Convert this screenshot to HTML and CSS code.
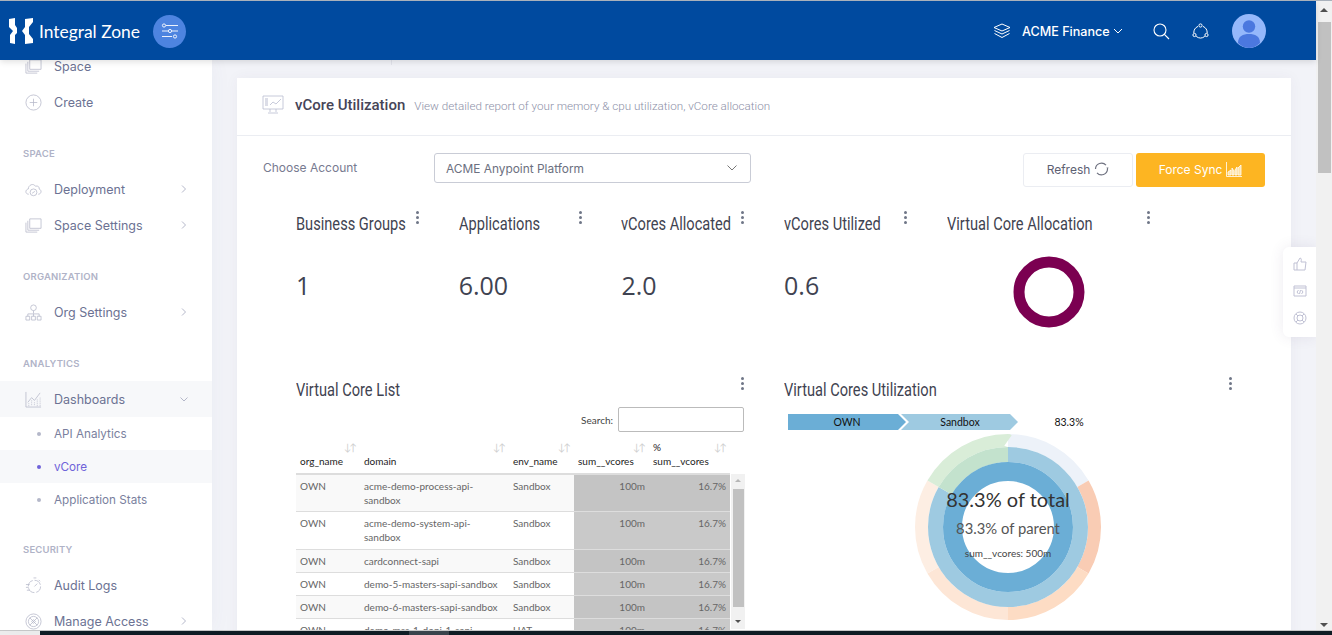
FILE: index.html
```html
<!DOCTYPE html>
<html lang="en">
<head>
    <meta charset="UTF-8">
    <title>vCore Utilization</title>
    <link rel="stylesheet" href="styles.css">
</head>
<body>
    <div class="window">
        <div class="page">
            <header class="topbar">
                <div class="brand">
                    <svg class="logo" width="24" height="26" viewBox="0 0 24 26" fill="#fff">
                        <path d="M0 1 L6 0 V7 L8 10 V15 L6 17 V26 L1 25 V17 L4 13 L0 9 Z"/>
                        <path d="M16 1 L24 0 V4 L20 9 V16 L24 21 V25 L16 26 V17 L13 13 L16 9 Z"/>
                    </svg>
                    <span class="brand-name">Integral Zone</span>
                    <span class="toggle">
                        <svg width="18" height="16" viewBox="0 0 18 16" fill="none" stroke="#fff" stroke-width="0.9">
                            <path d="M5 2.5H17M1 8H7M11 8H17M1 13.5H11"/>
                            <circle cx="3" cy="2.5" r="1.6"/><circle cx="9" cy="8" r="1.6"/><circle cx="14" cy="13.5" r="1.6"/>
                        </svg>
                    </span>
                </div>
                <div class="topbar-right">
                    <svg width="18" height="16" viewBox="0 0 18 16" fill="none" stroke="#fff" stroke-width="1">
                        <path d="M9 1 L17 4.5 L9 8 L1 4.5 Z"/>
                        <path d="M1.5 7.5 L9 11 L16.5 7.5"/>
                        <path d="M1.5 10.5 L9 14.5 L16.5 10.5"/>
                    </svg>
                    <span class="org-name">ACME Finance</span>
                    <svg class="org-caret" width="10" height="6" viewBox="0 0 10 6" fill="none" stroke="#fff"><path d="M1 1 L5 5 L9 1"/></svg>
                    <svg class="top-search" width="17" height="17" viewBox="0 0 17 17" fill="none" stroke="#fff" stroke-width="1.1">
                        <circle cx="7" cy="7" r="6"/><path d="M11.4 11.4 L16 16"/>
                    </svg>
                    <svg class="top-notify" width="17" height="16" viewBox="0 0 17 16" fill="none" stroke="#fff" stroke-width="1">
                        <circle cx="8.5" cy="2.5" r="1.6"/><circle cx="2.5" cy="12" r="1.6"/><circle cx="14.5" cy="12" r="1.6"/>
                        <path d="M6 3.4 A7 7 0 0 0 1.8 10M11 3.4 A7 7 0 0 1 15.2 10M4.2 13.4 A7 7 0 0 0 12.8 13.4"/>
                    </svg>
                    <span class="avatar">
                        <svg width="34" height="34" viewBox="0 0 34 34">
                            <circle cx="17" cy="12.5" r="6.2" fill="#4b78df"/>
                            <path d="M6 29 C6 22 11 20 17 20 C23 20 28 22 28 29 C25 32 21 34 17 34 C13 34 9 32 6 29 Z" fill="#4b78df"/>
                        </svg>
                    </span>
                </div>
            </header>

            <div class="layout">
                <aside class="sidebar">
                    <a class="nav-item">
                        <svg class="nav-icon" viewBox="0 0 18 18"><path d="M5 2H17V12H5Z"/><path d="M3 4V14H15M1 6V16H13"/></svg>
                        <span>Space</span>
                    </a>
                    <a class="nav-item">
                        <svg class="nav-icon" viewBox="0 0 18 18"><circle cx="9" cy="9" r="8"/><path d="M9 5V13M5 9H13"/></svg>
                        <span>Create</span>
                    </a>

                    <div class="nav-label">Space</div>
                    <a class="nav-item">
                        <svg class="nav-icon" viewBox="0 0 18 18"><path d="M4 14 C0 14 0 9 3.5 8.5 C3.5 4 9 2 11 5.5 C14 4.5 15.5 7 15 8.5 C18 9.5 17.5 14 14 14"/><circle cx="9" cy="12" r="3.6"/><path d="M7.5 13 L10.5 11"/></svg>
                        <span>Deployment</span>
                        <svg class="nav-arrow" viewBox="0 0 8 8"><path d="M2 0.5 L5.5 4 L2 7.5"/></svg>
                    </a>
                    <a class="nav-item">
                        <svg class="nav-icon" viewBox="0 0 18 18"><path d="M5 2H17V12H5Z"/><path d="M3 4V14H15M1 6V16H13"/></svg>
                        <span>Space Settings</span>
                        <svg class="nav-arrow" viewBox="0 0 8 8"><path d="M2 0.5 L5.5 4 L2 7.5"/></svg>
                    </a>

                    <div class="nav-label">Organization</div>
                    <a class="nav-item">
                        <svg class="nav-icon" viewBox="0 0 18 18"><circle cx="9" cy="4" r="3"/><path d="M9 7V10M3 13V10.5H15V13M9 10.5V13"/><path d="M1 13H5V17H1ZM7 13H11V17H7ZM13 13H17V17H13Z"/></svg>
                        <span>Org Settings</span>
                        <svg class="nav-arrow" viewBox="0 0 8 8"><path d="M2 0.5 L5.5 4 L2 7.5"/></svg>
                    </a>

                    <div class="nav-label">Analytics</div>
                    <a class="nav-item nav-open">
                        <svg class="nav-icon" viewBox="0 0 18 18"><path d="M1 1V17H17"/><path d="M3 12 L7 7 L10 10 L16 2"/><path d="M4 13V16M7 10V16M10 12V16M13 9V16M16 7V16" stroke-dasharray="1 1"/></svg>
                        <span>Dashboards</span>
                        <svg class="nav-arrow" viewBox="0 0 8 8"><path d="M0.5 2.5 L4 6 L7.5 2.5"/></svg>
                    </a>
                    <a class="sub-item"><i></i>API Analytics</a>
                    <a class="sub-item sub-active"><i></i>vCore</a>
                    <a class="sub-item"><i></i>Application Stats</a>

                    <div class="nav-label">Security</div>
                    <a class="nav-item">
                        <svg class="nav-icon" viewBox="0 0 18 18"><circle cx="10" cy="10" r="6.5" stroke-dasharray="8 2"/><path d="M10 10 L13 7M9 1H12M14.5 3 L16 4.5M1 8H5M1 11H4M2 14H5"/></svg>
                        <span>Audit Logs</span>
                    </a>
                    <a class="nav-item">
                        <svg class="nav-icon" viewBox="0 0 18 18"><circle cx="9" cy="9" r="8"/><circle cx="9" cy="9" r="5.4"/><path d="M5 5 L13 13M13 5 L5 13M7 9 L9 7 L11 9 L9 11 Z"/></svg>
                        <span>Manage Access</span>
                        <svg class="nav-arrow" viewBox="0 0 8 8"><path d="M2 0.5 L5.5 4 L2 7.5"/></svg>
                    </a>
                </aside>

                <main class="content">
                    <div class="subheader"><span class="subheader-tick"></span></div>
                    <section class="card">
                        <div class="card-head">
                            <svg class="card-icon" width="22" height="20" viewBox="0 0 22 20" fill="none" stroke="#b9bcd0" stroke-width="0.8">
                                <path d="M1 1H21V14H1ZM8 14V17M14 14V17M6 18H16"/>
                                <path d="M3 4H6M3 6H6M3 8H6M3 10H6" stroke-width="1"/>
                                <path d="M8 10 L11 7 L14 9 L19 4"/>
                            </svg>
                            <h2>vCore Utilization</h2>
                            <span class="card-desc">View detailed report of your memory &amp; cpu utilization, vCore allocation</span>
                        </div>

                        <div class="card-body">
                            <div class="toolbar">
                                <label class="account-label">Choose Account</label>
                                <div class="select">
                                    <span>ACME Anypoint Platform</span>
                                    <svg width="10" height="6" viewBox="0 0 10 6" fill="none" stroke="#777"><path d="M0.5 0.5 L5 5 L9.5 0.5"/></svg>
                                </div>
                                <button class="btn btn-refresh">Refresh
                                    <svg width="15" height="14" viewBox="0 0 15 14" fill="none" stroke="#6f7280" stroke-width="1.2">
                                        <path d="M1.5 7 A6 6 0 0 1 12 3.2M13.5 7 A6 6 0 0 1 3 10.8"/>
                                        <path d="M12.5 5.5 L14.5 5.5 L13.5 8 Z" fill="#6f7280" stroke="none"/>
                                    </svg>
                                </button>
                                <button class="btn btn-sync">Force Sync
                                    <svg width="16" height="15" viewBox="0 0 16 15" fill="none" stroke="#fff" stroke-width="0.8">
                                        <path d="M0.5 0V14.5H16"/>
                                        <path d="M2 13V10L5 8V13ZM6 13V6L8 9V13ZM9 13V8L11 5V13ZM12 13V6L15 3V13Z" fill="#fff" fill-opacity="0.6"/>
                                    </svg>
                                </button>
                            </div>

                            <div class="stats">
                                <div class="stat">
                                    <div class="widget-head"><h3>Business Groups</h3><span class="kebab"><i></i><i></i><i></i></span></div>
                                    <div class="stat-value">1</div>
                                </div>
                                <div class="stat">
                                    <div class="widget-head"><h3>Applications</h3><span class="kebab"><i></i><i></i><i></i></span></div>
                                    <div class="stat-value">6.00</div>
                                </div>
                                <div class="stat">
                                    <div class="widget-head"><h3>vCores Allocated</h3><span class="kebab"><i></i><i></i><i></i></span></div>
                                    <div class="stat-value">2.0</div>
                                </div>
                                <div class="stat">
                                    <div class="widget-head"><h3>vCores Utilized</h3><span class="kebab"><i></i><i></i><i></i></span></div>
                                    <div class="stat-value">0.6</div>
                                </div>
                                <div class="stat stat-wide">
                                    <div class="widget-head"><h3>Virtual Core Allocation</h3><span class="kebab"><i></i><i></i><i></i></span></div>
                                    <svg class="donut" width="72" height="72" viewBox="0 0 72 72">
                                        <circle cx="36" cy="36" r="30" fill="none" stroke="#7b0051" stroke-width="11"/>
                                    </svg>
                                </div>
                            </div>

                            <div class="panels">
                                <div class="panel">
                                    <div class="widget-head"><h3>Virtual Core List</h3><span class="kebab"><i></i><i></i><i></i></span></div>
                                    <div class="search-row">
                                        <label>Search:</label>
                                        <input class="search-input" type="text">
                                    </div>
                                    <div class="table-wrap">
                                        <table class="vcore-table">
                                            <colgroup>
                                                <col class="col-org"><col class="col-domain"><col class="col-env"><col class="col-sum"><col class="col-pct">
                                            </colgroup>
                                            <thead>
                                                <tr>
                                                    <th><div class="th-top"><span></span><span class="sort">↓↑</span></div>org_name</th>
                                                    <th><div class="th-top"><span></span><span class="sort">↓↑</span></div>domain</th>
                                                    <th><div class="th-top"><span></span><span class="sort">↓↑</span></div>env_name</th>
                                                    <th><div class="th-top"><span></span><span class="sort">↓↑</span></div>sum__vcores</th>
                                                    <th><div class="th-top"><span>%</span><span class="sort">↓↑</span></div>sum__vcores</th>
                                                </tr>
                                            </thead>
                                            <tbody>
                                                <tr class="tall"><td>OWN</td><td>acme-demo-process-api-sandbox</td><td>Sandbox</td><td class="num shade-a">100m</td><td class="num shade-a">16.7%</td></tr>
                                                <tr class="tall"><td>OWN</td><td>acme-demo-system-api-sandbox</td><td>Sandbox</td><td class="num shade-b">100m</td><td class="num shade-b">16.7%</td></tr>
                                                <tr><td>OWN</td><td>cardconnect-sapi</td><td>Sandbox</td><td class="num shade-a">100m</td><td class="num shade-a">16.7%</td></tr>
                                                <tr><td>OWN</td><td>demo-5-masters-sapi-sandbox</td><td>Sandbox</td><td class="num shade-b">100m</td><td class="num shade-b">16.7%</td></tr>
                                                <tr><td>OWN</td><td>demo-6-masters-sapi-sandbox</td><td>Sandbox</td><td class="num shade-a">100m</td><td class="num shade-a">16.7%</td></tr>
                                                <tr><td>OWN</td><td>demo-mss-1-dopi-1-sapi</td><td>UAT</td><td class="num shade-b">100m</td><td class="num shade-b">16.7%</td></tr>
                                            </tbody>
                                        </table>
                                        <div class="table-scroll">
                                            <span class="arrow-up"></span>
                                            <span class="table-thumb"></span>
                                            <span class="arrow-down"></span>
                                        </div>
                                    </div>
                                </div>

                                <div class="panel">
                                    <div class="widget-head"><h3>Virtual Cores Utilization</h3><span class="kebab"><i></i><i></i><i></i></span></div>
                                    <svg class="crumbs" width="300" height="18" viewBox="0 0 300 18">
                                        <polygon points="0,1 110,1 118,9 110,17 0,17" fill="#6baed6"/>
                                        <polygon points="113,1 222,1 230,9 222,17 113,17 121,9" fill="#9ecae1"/>
                                        <text x="59" y="13">OWN</text>
                                        <text x="172" y="13">Sandbox</text>
                                        <text class="crumb-pct" x="281" y="13">83.3%</text>
                                    </svg>
                                    <svg class="sunburst" width="188" height="188" viewBox="-94 -94 188 188">
                                        <g fill="none" transform="rotate(-90)">
                                            <circle r="86.5" stroke-width="13" pathLength="360" stroke="#edf2f9" stroke-dasharray="60 300"/>
                                            <circle r="86.5" stroke-width="13" pathLength="360" stroke="#f9ccb4" stroke-dasharray="60 300" stroke-dashoffset="-60"/>
                                            <circle r="86.5" stroke-width="13" pathLength="360" stroke="#fddcc4" stroke-dasharray="60 300" stroke-dashoffset="-120"/>
                                            <circle r="86.5" stroke-width="13" pathLength="360" stroke="#fde6d6" stroke-dasharray="60 300" stroke-dashoffset="-180"/>
                                            <circle r="86.5" stroke-width="13" pathLength="360" stroke="#fdeee3" stroke-dasharray="60 300" stroke-dashoffset="-240"/>
                                            <circle r="86.5" stroke-width="13" pathLength="360" stroke="#d9edd8" stroke-dasharray="60 300" stroke-dashoffset="-300"/>
                                            <circle r="72.5" stroke-width="15" pathLength="360" stroke="#9ecae1" stroke-dasharray="300 60"/>
                                            <circle r="72.5" stroke-width="15" pathLength="360" stroke="#c3e2cd" stroke-dasharray="60 300" stroke-dashoffset="-300"/>
                                            <circle r="55.5" stroke-width="19" stroke="#6baed6"/>
                                        </g>
                                        <text class="sb-total" y="-20">83.3% of total</text>
                                        <text class="sb-parent" y="7">83.3% of parent</text>
                                        <text class="sb-value" y="30">sum__vcores: 500m</text>
                                    </svg>
                                </div>
                            </div>
                        </div>
                    </section>

                    <div class="quick-panel">
                        <svg width="14" height="14" viewBox="0 0 14 14"><path d="M1 6H4V13H1ZM4 6 L7 1 C8.5 1 8.5 3 8 5H13 L12 13H4"/></svg>
                        <svg width="14" height="12" viewBox="0 0 14 12"><path d="M1 1H13V11H1ZM1 3H13M5.5 5 L4 7 L5.5 9M8.5 5 L10 7 L8.5 9M7.5 5 L6.5 9"/></svg>
                        <svg width="14" height="14" viewBox="0 0 14 14"><circle cx="7" cy="7" r="6"/><circle cx="7" cy="7" r="3"/><path d="M3 3 L5 5M11 3 L9 5M3 11 L5 9M11 11 L9 9"/></svg>
                    </div>
                </main>
            </div>
        </div>

        <div class="page-scroll">
            <span class="arrow-up dark"></span>
            <span class="page-thumb"></span>
            <span class="arrow-down dark"></span>
        </div>
    </div>

    <div class="taskbar">
        <span class="taskbar-blank"></span>
        <span class="taskbar-app"></span>
    </div>
</body>
</html>
```

FILE: styles.css
```css
* {
    box-sizing: border-box;
    margin: 0;
    padding: 0;
}

html, body {
    height: 100%;
    overflow: hidden;
}

body {
    display: flex;
    flex-direction: column;
    font-family: Inter, "Noto Sans", sans-serif;
    background: #f2f3f8;
    border-top: 1px solid #a9b1bb;
}

.window {
    flex: 1;
    display: flex;
    min-height: 0;
}

.page {
    flex: 1;
    display: flex;
    flex-direction: column;
    min-width: 0;
}

/* top bar */
.topbar {
    height: 59px;
    flex: none;
    display: flex;
    align-items: center;
    justify-content: space-between;
    padding-top: 1px;
    background: #004a9f;
    position: relative;
    z-index: 2;
    box-shadow: 0 2px 6px rgba(0,0,0,0.12);
}

.brand {
    display: flex;
    align-items: center;
    padding-left: 9px;
}

.brand-name {
    margin-left: 6px;
    font-family: Lato, sans-serif;
    font-size: 17.4px;
    color: #fff;
    width: 114px;
}

.toggle {
    width: 33px;
    height: 33px;
    border-radius: 50%;
    background: #4d84e0;
    display: flex;
    align-items: center;
    justify-content: center;
}

.topbar-right {
    display: flex;
    align-items: center;
    padding-right: 50px;
}

.org-name {
    margin-left: 11px;
    font-size: 12.6px;
    font-weight: 500;
    color: #fff;
    width: 91px;
    white-space: nowrap;
}

.top-search { margin-left: 30px; }
.top-notify { margin-left: 22px; }

.avatar {
    margin-left: 23px;
    width: 34px;
    height: 34px;
    border-radius: 50%;
    background: #95b8fb;
    overflow: hidden;
}

.avatar svg { display: block; }

.layout {
    flex: 1;
    display: flex;
    min-height: 0;
    position: relative;
}

/* sidebar */
.sidebar {
    width: 212px;
    flex: none;
    background: #fff;
    overflow: hidden;
    padding-top: 0;
    box-shadow: 0 0 20px rgba(80,90,130,0.05);
}

.nav-item {
    height: 36px;
    display: flex;
    align-items: center;
    padding: 0 24px 0 25px;
    font-size: 12.5px;
    color: #6c7293;
}

.nav-item:first-child {
    margin-top: -12px;
}

.nav-item span { flex: 1; margin-left: 12px; white-space: nowrap; }

.nav-icon {
    width: 17px;
    height: 17px;
    fill: none;
    stroke: #b4b7c9;
    stroke-width: 0.8;
}

.nav-arrow {
    width: 8px;
    height: 8px;
    fill: none;
    stroke: #b4b7c9;
}

.nav-open { background: #f7f8fa; }

.nav-label {
    height: 20px;
    margin-top: 24px;
    margin-bottom: 7px;
    padding-left: 23px;
    line-height: 20px;
    font-size: 9.5px;
    font-weight: 600;
    letter-spacing: 0.2px;
    text-transform: uppercase;
    color: #b0b3c7;
}

.sub-item {
    height: 33px;
    display: flex;
    align-items: center;
    padding-left: 37px;
    font-size: 11.7px;
    color: #7a7f9e;
}

.sub-item i {
    width: 4px;
    height: 4px;
    border-radius: 50%;
    background: #b4b7c9;
    margin-right: 13px;
}

.sub-active {
    background: #f7f8fa;
    color: #6f63d9;
}

.sub-active i { background: #6f63d9; }

/* main area */
.content {
    flex: 1;
    min-width: 0;
    padding: 0 25px;
    overflow: hidden;
    position: relative;
}

.subheader {
    height: 18px;
    padding-left: 154px;
}

.subheader-tick {
    display: block;
    width: 1px;
    height: 5px;
    background: #e3e4ec;
}

.card {
    background: #fff;
    box-shadow: 0 0 13px rgba(82,63,105,0.05);
}

.card-head {
    height: 58px;
    display: flex;
    align-items: center;
    padding: 0 0 3px 25px;
    border-bottom: 1px solid #ebedf2;
}

.card-head h2 {
    margin-left: 11px;
    font-family: Roboto, sans-serif;
    font-size: 15px;
    font-weight: 500;
    color: #464457;
}

.card-desc {
    margin-left: 9px;
    padding-top: 1px;
    font-family: Roboto, sans-serif;
    font-weight: 300;
    font-size: 11.65px;
    color: #8d90a8;
    white-space: nowrap;
}

.card-body {
    padding: 17px 26px 0;
    height: 520px;
}

.toolbar {
    display: flex;
    align-items: flex-start;
}

.account-label {
    width: 171px;
    height: 30px;
    line-height: 30px;
    font-size: 12px;
    color: #777a90;
}

.select {
    width: 317px;
    height: 30px;
    border: 1px solid #c9ccd6;
    border-radius: 3px;
    display: flex;
    align-items: center;
    justify-content: space-between;
    padding: 0 13px 0 11px;
    font-size: 11.9px;
    color: #6c7080;
}

.btn {
    height: 34px;
    border-radius: 3px;
    font-family: inherit;
    font-size: 12px;
    display: flex;
    align-items: center;
    justify-content: center;
    gap: 4px;
    padding-bottom: 2px;
}

.btn-refresh {
    width: 110px;
    margin-left: 272px;
    background: #fff;
    border: 1px solid #ebedf2;
    color: #5d6072;
}

.btn-sync {
    width: 129px;
    margin-left: 3px;
    background: #fdb522;
    border: none;
    color: #fff;
}

/* widgets */
.stats {
    display: flex;
    margin-top: 23px;
    padding-left: 33px;
}

.stat { width: 162.7px; }

.stat .widget-head { width: 124px; }

.stat-wide { width: 210px; }

.stat.stat-wide .widget-head { width: 204px; }

.widget-head {
    display: flex;
    height: 28px;
    align-items: flex-start;
}

/* no condensed face installed, so the heading is squeezed */
.widget-head h3 {
    flex: 1;
    min-width: 0;
    font-family: Roboto, sans-serif;
    font-weight: 400;
    font-size: 19px;
    line-height: 28px;
    color: #3f4351;
    white-space: nowrap;
    transform: scaleX(0.77);
    transform-origin: left center;
}

.kebab {
    flex: none;
    display: flex;
    flex-direction: column;
    gap: 2px;
    margin-top: 1px;
    width: 5px;
    align-items: center;
}

.kebab i {
    width: 3px;
    height: 3px;
    border-radius: 50%;
    background: #6f7687;
}

.stat-value {
    margin-top: 32px;
    font-family: "Open Sans", sans-serif;
    font-size: 25px;
    line-height: 30px;
    color: #3f4351;
}

.donut {
    display: block;
    margin: 18px 0 0 66px;
}

.panels {
    display: grid;
    grid-template-columns: 450px 450px;
    column-gap: 38px;
    margin-top: 48px;
    padding-left: 33px;
}

.panel .widget-head { margin-right: 1px; }

.search-row {
    display: flex;
    justify-content: flex-end;
    align-items: center;
    gap: 5px;
    margin-top: 3px;
    padding-right: 2px;
    font-family: Lato, sans-serif;
    font-size: 10px;
    color: #444;
}

.search-input {
    width: 126px;
    height: 25px;
    border: 1px solid #bbb;
    border-radius: 2px;
    background: #fff;
}

.table-wrap {
    position: relative;
    margin-top: 8px;
    width: 449px;
}

.vcore-table {
    width: 434px;
    table-layout: fixed;
    border-collapse: collapse;
    font-family: Lato, sans-serif;
    font-size: 10px;
    color: #666;
}

.col-org { width: 64px; }
.col-domain { width: 149px; }
.col-env { width: 65px; }
.col-sum { width: 75px; }
.col-pct { width: 81px; }

.vcore-table th {
    padding: 0 4px 5px;
    text-align: left;
    font-weight: 400;
    color: #222;
    line-height: 14px;
    border-bottom: 2px solid #ddd;
    vertical-align: bottom;
}

.th-top {
    display: flex;
    justify-content: space-between;
}

.sort {
    font-size: 10px;
    letter-spacing: -2px;
    color: #d0d0d0;
    padding-right: 1px;
}

.vcore-table td {
    height: 23px;
    padding: 4px;
    line-height: 14px;
    border-bottom: 1px solid #ddd;
    vertical-align: top;
}

.vcore-table tbody tr:nth-child(odd) { background: #f9f9f9; }

.vcore-table tr.tall td { height: 37.5px; }

.vcore-table td.num { text-align: right; }

.vcore-table td.shade-a { background: #c4c4c4; }
.vcore-table td.shade-b { background: #c9c9c9; }

.table-scroll {
    position: absolute;
    top: 34px;
    left: 435px;
    width: 14px;
    height: 155px;
    background: #f1f1f1;
    display: flex;
    flex-direction: column;
    align-items: center;
    padding: 5px 1px 6px;
}

.table-thumb {
    width: 11px;
    height: 118px;
    margin-top: 7px;
    background: #c1c1c1;
}

.arrow-up, .arrow-down {
    width: 0;
    height: 0;
    border-left: 3px solid transparent;
    border-right: 3px solid transparent;
}

.arrow-up { border-bottom: 3px solid #b5b5b5; }
.arrow-down { margin-top: auto; border-top: 3px solid #505050; }

.crumbs {
    display: block;
    margin: 9px 0 0 4px;
    font-family: Lato, sans-serif;
    font-size: 10.5px;
}

.crumbs text {
    text-anchor: middle;
    font-weight: 400;
    fill: #111;
}

.sunburst {
    display: block;
    margin: 2px 0 0 130px;
    font-family: Lato, sans-serif;
}

.sunburst text { text-anchor: middle; }

.sb-total { font-size: 20px; fill: #333; }
.sb-parent { font-size: 14.8px; fill: #555; }
.sb-value { font-size: 10px; fill: #444; }

/* floating quick links */
.quick-panel {
    position: absolute;
    top: 187px;
    right: 0;
    width: 33px;
    height: 90px;
    padding-bottom: 3px;
    background: #fff;
    border-radius: 6px 0 0 6px;
    box-shadow: 0 0 14px rgba(82,63,105,0.1);
    display: flex;
    flex-direction: column;
    align-items: center;
    justify-content: center;
    gap: 14px;
}

.quick-panel svg {
    fill: none;
    stroke: #c0c1d4;
    stroke-width: 1;
}

/* page scrollbar */
.page-scroll {
    width: 16px;
    flex: none;
    background: #f1f1f1;
    display: flex;
    flex-direction: column;
    align-items: center;
    padding: 7px 0 3px;
}

.page-thumb {
    width: 13px;
    height: 151px;
    margin-top: 10px;
    background: #c1c1c1;
}

.arrow-up.dark {
    border-left-width: 4px;
    border-right-width: 4px;
    border-bottom: 4px solid #505050;
}

.arrow-down.dark {
    margin-top: auto;
    border-left-width: 4px;
    border-right-width: 4px;
    border-top: 4px solid #505050;
}

/* dark strip at the bottom edge */
.taskbar {
    height: 5px;
    flex: none;
    display: flex;
    background: #0f1c24;
    border-top: 1px solid #c9c9c9;
}

.taskbar-blank {
    width: 40px;
    background: #eee;
}

.taskbar-app {
    width: 40px;
    margin-left: 369px;
    background: #39434b;
}
```
